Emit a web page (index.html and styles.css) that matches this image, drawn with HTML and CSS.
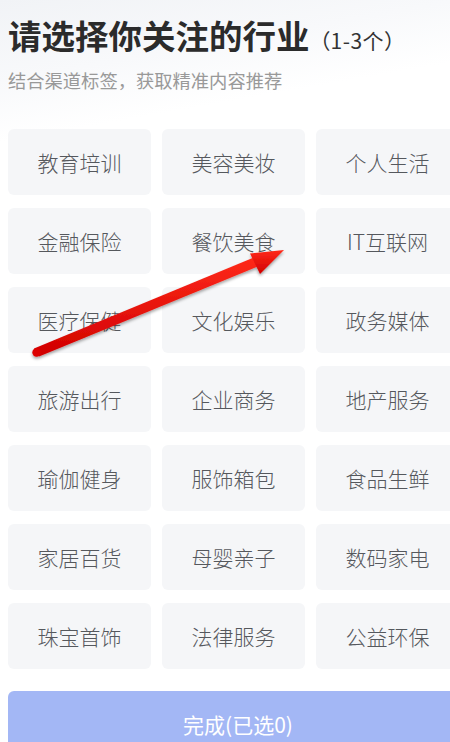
FILE: index.html
```html
<!DOCTYPE html>
<html lang="zh">
<head>
<meta charset="utf-8">
<link rel="stylesheet" href="styles.css">
</head>
<body>
<div class="page">
  <header class="head">
    <h1 class="title">请选择你关注的行业<span class="range"><span class="fw open">（</span>1-3个<span class="fw close">）</span></span></h1>
    <p class="sub">结合渠道标签<span class="fw close">，</span>获取精准内容推荐</p>
  </header>
  <div class="grid">
    <div class="cell">教育培训</div>
    <div class="cell">美容美妆</div>
    <div class="cell">个人生活</div>
    <div class="cell">金融保险</div>
    <div class="cell">餐饮美食</div>
    <div class="cell">IT互联网</div>
    <div class="cell">医疗保健</div>
    <div class="cell">文化娱乐</div>
    <div class="cell">政务媒体</div>
    <div class="cell">旅游出行</div>
    <div class="cell">企业商务</div>
    <div class="cell">地产服务</div>
    <div class="cell">瑜伽健身</div>
    <div class="cell">服饰箱包</div>
    <div class="cell">食品生鲜</div>
    <div class="cell">家居百货</div>
    <div class="cell">母婴亲子</div>
    <div class="cell">数码家电</div>
    <div class="cell">珠宝首饰</div>
    <div class="cell">法律服务</div>
    <div class="cell">公益环保</div>
  </div>
  <button class="done">完成(已选0)</button>
  <svg class="arrow" width="450" height="742" viewBox="0 0 450 742">
    <defs>
      <linearGradient id="rg" x1="0" y1="0" x2="0" y2="1">
        <stop offset="0" stop-color="#ff2a1a"/>
        <stop offset="1" stop-color="#d00000"/>
      </linearGradient>
      <filter id="sh" x="-10%" y="-10%" width="120%" height="130%">
        <feDropShadow dx="0" dy="2" stdDeviation="1.5" flood-color="#000" flood-opacity="0.35"/>
      </filter>
    </defs>
    <g filter="url(#sh)">
      <polygon points="34,348.5 255,257 259,266 39,356.5" fill="url(#rg)"/>
      <circle cx="36.5" cy="352.5" r="4.2" fill="#dc0000"/>
      <polygon points="284,250 250,253.5 260,274" fill="url(#rg)"/>
    </g>
  </svg>
</div>
</body>
</html>
```

FILE: styles.css
```css
* { box-sizing: border-box; }
html, body {
  margin: 0;
  padding: 0;
}
body {
  width: 450px;
  height: 742px;
  overflow: hidden;
  font-family: "Noto Sans CJK SC", "Noto Sans", sans-serif;
  background: linear-gradient(170deg, #f1f3f6 0px, #f8f9fb 80px, #ffffff 140px);
}
.page {
  position: relative;
  padding: 0 0 0 8px;
  height: 742px;
}
.head {
  padding-top: 12px;
}
.title {
  margin: 0;
  font-size: 33.5px;
  line-height: 46px;
  font-weight: 700;
  color: #2b2b2b;
  white-space: nowrap;
}
.range {
  font-size: 21px;
  line-height: 1;
  font-weight: 400;
  color: #333;
  letter-spacing: 0.5px;
}
.fw {
  display: inline-block;
  width: 1em;
}
.fw.open {
  text-align: right;
}
.fw.close {
  text-align: left;
}
.sub {
  margin: 10px 0 0;
  font-size: 18.3px;
  line-height: 24px;
  color: #999999;
}
.grid {
  margin-top: 37px;
  display: grid;
  grid-template-columns: 143px 143px 143px;
  grid-auto-rows: 66px;
  gap: 13px 11px;
  width: 460px;
}
.cell {
  background: #f5f6f8;
  border-radius: 6px;
  display: flex;
  align-items: center;
  justify-content: center;
  font-size: 21px;
  font-weight: 300;
  color: #55585d;
  white-space: nowrap;
}
.done {
  display: block;
  margin-top: 22px;
  width: 460px;
  height: 66px;
  border: 0;
  border-radius: 6px;
  background: #a3b7f5;
  color: #ffffff;
  font-family: "Noto Sans CJK SC", "Noto Sans", sans-serif;
  font-size: 21px;
  padding: 0;
}
.arrow {
  position: absolute;
  left: 0;
  top: 0;
  pointer-events: none;
}
```
